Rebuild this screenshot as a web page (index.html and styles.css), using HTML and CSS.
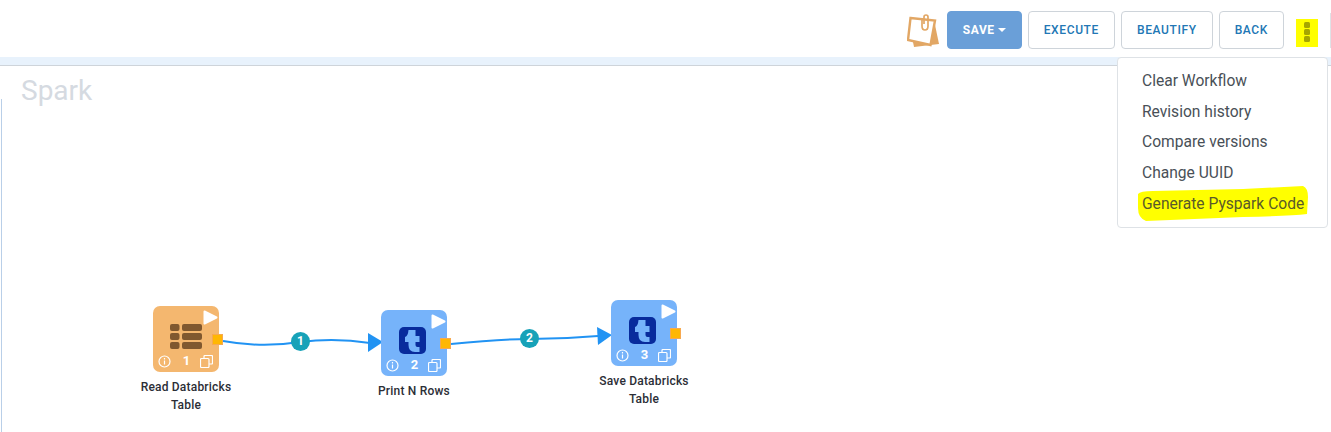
FILE: index.html
```html
<!DOCTYPE html>
<html lang="en">
    <head>
        <meta charset="UTF-8" />
        <title>Spark Workflow</title>
        <link rel="stylesheet" href="styles.css">
    </head>
    <body>
        <header class="topbar">
            <svg class="note-icon" width="33" height="33" viewBox="0 -1 33 33">
                <path d="M27 5 L32 29 L7 32 L6 27 Z" fill="#e2a765" />
                <path d="M3.5 3 L28 5.5 L23.5 30 L1 25 Z" fill="#fff" stroke="#e2a765" stroke-width="2.4" />
                <path d="M15 4 L15 11 Q15 15 18 15 Q21 15 21 11 L21 2 Q21 0 19 0 Q17 0 17 2 L17 9" fill="none" stroke="#e2a765" stroke-width="1.7" />
            </svg>
            <button class="btn btn-save">SAVE<span class="caret"></span></button>
            <button class="btn">EXECUTE</button>
            <button class="btn">BEAUTIFY</button>
            <button class="btn">BACK</button>
            <div class="more"><span></span><span></span><span></span></div>
            <div class="divider"></div>
        </header>
        <div class="band"></div>

        <main class="canvas">
            <h1 class="title">Spark</h1>
            <div class="left-rule"></div>

            <svg class="wires" width="1331" height="367" viewBox="0 65 1331 367">
                <path d="M223 340 C250 345 275 345 300 341 C325 338 350 339 370 342" fill="none" stroke="#2193f3" stroke-width="2" />
                <path d="M368 332 L383 341 L368 351 Z" fill="#2193f3" />
                <path d="M451 343 C480 340 510 338 530 338 C555 338 575 337 598 335" fill="none" stroke="#2193f3" stroke-width="2" />
                <path d="M597 326 L612 334 L598 344 Z" fill="#2193f3" />
            </svg>
            <div class="wire-badge badge-one">1</div>
            <div class="wire-badge badge-two">2</div>

            <div class="node node-read">
                <div class="node-box orange">
                    <svg class="play" width="15" height="15" viewBox="0 0 15 15"><path d="M1.5 1.5 L13.5 7.5 L1.5 13.5 Z" /></svg>
                    <svg class="table-icon" width="32" height="25" viewBox="0 0 32 25">
                        <rect x="0" y="0" width="9.500" height="7" rx="2" />
                        <rect x="12" y="0" width="20" height="7" rx="2" />
                        <rect x="0" y="9" width="9.500" height="7" rx="2" />
                        <rect x="12" y="9" width="20" height="7" rx="2" />
                        <rect x="0" y="18" width="9.500" height="7" rx="2" />
                        <rect x="12" y="18" width="20" height="7" rx="2" />
                    </svg>
                    <div class="node-foot">
                        <svg class="info" width="13" height="13" viewBox="0 0 13 13">
                            <circle cx="6.5" cy="6.5" r="5.5" fill="none" stroke="#fff" stroke-width="1.2" />
                            <path d="M6.5 5.500 V9.500 M6.500 3 V4.400" stroke="#fff" stroke-width="1.2" />
                        </svg>
                        <span class="num">1</span>
                        <svg class="copy" width="13" height="13" viewBox="0 0 13 13">
                            <rect x="0.5" y="3.5" width="8.5" height="9" rx="1" fill="none" stroke="#fff" stroke-width="1.2" />
                            <path d="M4 3.5 V1.5 Q4 0.5 5 0.5 H11.5 Q12.5 0.5 12.5 1.5 V8 Q12.5 9 11.5 9 H9" fill="none" stroke="#fff" stroke-width="1.2" />
                        </svg>
                    </div>
                    <span class="port"></span>
                </div>
                <div class="node-label">Read Databricks<br />Table</div>
            </div>

            <div class="node node-print">
                <div class="node-box blue">
                    <svg class="play" width="15" height="15" viewBox="0 0 15 15"><path d="M1.5 1.5 L13.5 7.5 L1.5 13.5 Z" /></svg>
                    <svg class="t-tile" width="27" height="27" viewBox="0 0 27 27">
                        <rect width="27" height="27" rx="5" fill="#082b9c" />
                        <path d="M9.500 3 H16.500 V9 H20.500 V15 H16.500 V18 Q16.500 20 18.500 20 H20.500 V25 H16 Q9.500 25 9.500 18 V15 H6 V10 Q9 9 9.500 3 Z" fill="#76b3fa" />
                    </svg>
                    <div class="node-foot">
                        <svg class="info" width="13" height="13" viewBox="0 0 13 13">
                            <circle cx="6.5" cy="6.5" r="5.5" fill="none" stroke="#fff" stroke-width="1.2" />
                            <path d="M6.5 5.500 V9.500 M6.500 3 V4.400" stroke="#fff" stroke-width="1.2" />
                        </svg>
                        <span class="num">2</span>
                        <svg class="copy" width="13" height="13" viewBox="0 0 13 13">
                            <rect x="0.5" y="3.5" width="8.5" height="9" rx="1" fill="none" stroke="#fff" stroke-width="1.2" />
                            <path d="M4 3.5 V1.5 Q4 0.5 5 0.5 H11.5 Q12.5 0.5 12.5 1.5 V8 Q12.5 9 11.5 9 H9" fill="none" stroke="#fff" stroke-width="1.2" />
                        </svg>
                    </div>
                    <span class="port"></span>
                </div>
                <div class="node-label">Print N Rows</div>
            </div>

            <div class="node node-save">
                <div class="node-box blue">
                    <svg class="play" width="15" height="15" viewBox="0 0 15 15"><path d="M1.5 1.5 L13.5 7.5 L1.5 13.5 Z" /></svg>
                    <svg class="t-tile" width="27" height="27" viewBox="0 0 27 27">
                        <rect width="27" height="27" rx="5" fill="#082b9c" />
                        <path d="M9.500 3 H16.500 V9 H20.500 V15 H16.500 V18 Q16.500 20 18.500 20 H20.500 V25 H16 Q9.500 25 9.500 18 V15 H6 V10 Q9 9 9.500 3 Z" fill="#76b3fa" />
                    </svg>
                    <div class="node-foot">
                        <svg class="info" width="13" height="13" viewBox="0 0 13 13">
                            <circle cx="6.5" cy="6.5" r="5.5" fill="none" stroke="#fff" stroke-width="1.2" />
                            <path d="M6.5 5.500 V9.500 M6.500 3 V4.400" stroke="#fff" stroke-width="1.2" />
                        </svg>
                        <span class="num">3</span>
                        <svg class="copy" width="13" height="13" viewBox="0 0 13 13">
                            <rect x="0.5" y="3.5" width="8.5" height="9" rx="1" fill="none" stroke="#fff" stroke-width="1.2" />
                            <path d="M4 3.5 V1.5 Q4 0.5 5 0.5 H11.5 Q12.5 0.5 12.5 1.5 V8 Q12.5 9 11.5 9 H9" fill="none" stroke="#fff" stroke-width="1.2" />
                        </svg>
                    </div>
                    <span class="port"></span>
                </div>
                <div class="node-label">Save Databricks<br />Table</div>
            </div>
        </main>

        <ul class="menu">
            <li>Clear Workflow</li>
            <li>Revision history</li>
            <li>Compare versions</li>
            <li>Change UUID</li>
            <li class="marked">
                <svg class="marker" width="208" height="169" viewBox="1118 58 208 169">
                    <path d="M1138 194 Q1140 191 1153 191 L1243 189 L1303 186 Q1308 188 1308 197 L1307 214 Q1290 216 1243 217 L1146 221 Q1138 218 1138 208 Z" fill="#ffff00" />
                </svg>
                <span>Generate Pyspark Code</span>
            </li>
        </ul>
    </body>
</html>
```

FILE: styles.css
```css
html,
body {
    margin: 0;
    padding: 0;
    height: 432px;
    overflow: hidden;
    background: #fff;
    font-family: "Roboto", "Liberation Sans", sans-serif;
}

.topbar {
    height: 57px;
    display: flex;
    align-items: center;
    justify-content: flex-end;
    gap: 6px;
    padding-top: 3px;
    box-sizing: border-box;
}

.note-icon {
    margin-right: 1px;
}

.btn {
    height: 38px;
    padding: 0 15px;
    background: #fff;
    border: 1px solid #ced4da;
    border-radius: 4px;
    color: #2277b5;
    font-family: inherit;
    font-size: 12px;
    font-weight: 500;
    letter-spacing: 0.62px;
}

.btn-save {
    background: #6a9fd8;
    border-color: #6a9fd8;
    color: #fff;
    font-weight: 700;
    letter-spacing: 0.6px;
}

.caret {
    display: inline-block;
    margin-left: 3px;
    vertical-align: 2px;
    border-top: 4px solid #fff;
    border-left: 4px solid transparent;
    border-right: 4px solid transparent;
}

.more {
    width: 22px;
    height: 28px;
    margin: 6px 0 0 6px;
    padding-top: 3px;
    box-sizing: border-box;
    background: #ffff00;
    display: flex;
    flex-direction: column;
    align-items: center;
    gap: 1px;
}

.more span {
    width: 6px;
    height: 6px;
    border-radius: 1.5px;
    background: #a6a600;
}

.divider {
    width: 1px;
    height: 35px;
    margin-left: 6px;
    background: #dee2e6;
}

.band {
    height: 8px;
    background: #e8f2fc;
    border-bottom: 1px solid #ced4da;
}

.canvas {
    position: relative;
    height: 366px;
}

.title {
    margin: 0;
    padding: 9px 0 0 21px;
    color: #d5dae1;
    font-size: 28px;
    font-weight: 400;
    line-height: 32px;
}

.left-rule {
    position: absolute;
    left: 1px;
    top: 33px;
    bottom: 0;
    width: 1px;
    background: #b9cfe8;
}

.wires {
    position: absolute;
    left: 0;
    top: 0;
}

.wire-badge {
    position: absolute;
    width: 19px;
    height: 19px;
    border-radius: 50%;
    background: #17a2b8;
    color: #fff;
    font-size: 12px;
    font-weight: 700;
    line-height: 19px;
    text-align: center;
}

.badge-one {
    left: 291px;
    top: 266px;
}

.badge-two {
    left: 520px;
    top: 263px;
}

.node {
    position: absolute;
    width: 120px;
    display: flex;
    flex-direction: column;
    align-items: center;
}

.node-read {
    left: 126px;
    top: 240px;
}

.node-print {
    left: 354px;
    top: 244px;
}

.node-save {
    left: 584px;
    top: 234px;
}

.node-box {
    position: relative;
    width: 66px;
    height: 66px;
    border-radius: 7px;
    display: flex;
    flex-direction: column;
    align-items: center;
}

.orange {
    background: #f4b76f;
}

.blue {
    background: #76b3fa;
}

.play {
    position: absolute;
    top: 4px;
    right: 1px;
    fill: #fff;
    stroke: #fff;
    stroke-width: 2;
    stroke-linejoin: round;
}

.table-icon {
    margin-top: 18px;
    margin-right: 1px;
    fill: #80582f;
}

.t-tile {
    margin: 17px 3px 0 0;
}

.node-foot {
    position: absolute;
    left: 5px;
    right: 6px;
    bottom: 4px;
    display: flex;
    align-items: center;
    justify-content: space-between;
}

.num {
    margin-left: 2px;
    color: #fff;
    font-size: 13px;
    font-weight: 700;
    line-height: 14px;
}

.port {
    position: absolute;
    right: -4px;
    top: 28px;
    width: 9px;
    height: 9px;
    background: #ffb703;
    border: 1px solid #f7a94f;
}

.node-label {
    margin-top: 6px;
    color: #2b2e36;
    font-size: 12px;
    font-weight: 500;
    line-height: 18px;
    letter-spacing: 0.2px;
    text-align: center;
    white-space: nowrap;
}

.menu {
    position: absolute;
    left: 1117px;
    top: 57px;
    width: 211px;
    height: 171px;
    margin: 0;
    padding: 8px 0;
    box-sizing: border-box;
    list-style: none;
    background: #fff;
    border: 1px solid #dee2e6;
    border-radius: 4px;
    color: #495057;
    font-size: 15.6px;
}

.menu li {
    height: 30.7px;
    line-height: 30px;
    padding-left: 24px;
    white-space: nowrap;
}

.marker {
    position: absolute;
    left: 0;
    top: 0;
}

.marked span {
    position: relative;
    color: #5a5a2a;
}
```
